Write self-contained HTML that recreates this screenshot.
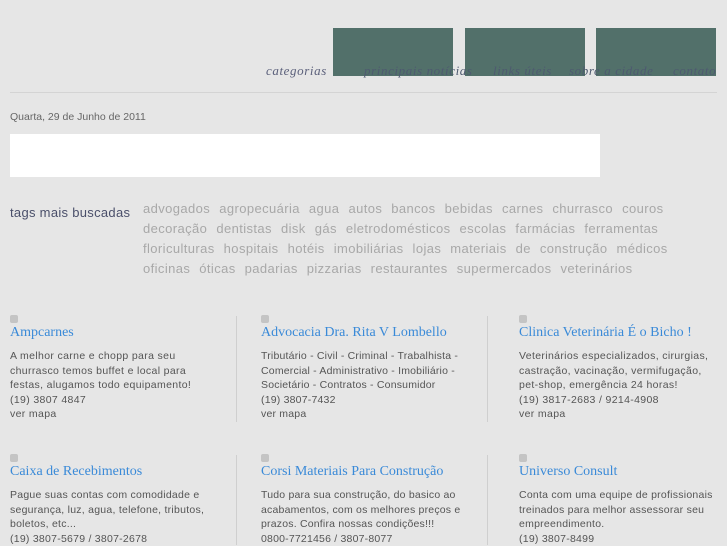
<!DOCTYPE html>
<html><head><meta charset="utf-8"><style>
body{margin:0;width:727px;height:545px;background:#e6e6e6;overflow:hidden;font-family:"Liberation Sans",sans-serif;position:relative}
.a{position:absolute;white-space:nowrap}
.box{position:absolute;top:28px;width:120px;height:48px;background:#52706a}
.nav{position:absolute;top:63px;font-family:"Liberation Serif",serif;font-style:italic;font-size:13px;color:#5a5f7a;letter-spacing:0.6px;white-space:nowrap}
.tag{position:absolute;left:143px;font-size:13px;color:#a8a8a8;word-spacing:5px;white-space:nowrap;letter-spacing:0.4px}
.t{position:absolute;font-family:"Liberation Serif",serif;font-size:14px;color:#3a8ad8;white-space:nowrap}
.d{position:absolute;width:8px;height:8px;border-radius:2px;background:#c4c4c4}
.p{position:absolute;font-size:10.5px;line-height:14.5px;color:#555;width:190px;letter-spacing:0.35px}
.v{position:absolute;width:1px;background:#cfcfcf}
</style></head><body>
<div class="box" style="left:333px"></div>
<div class="box" style="left:465px"></div>
<div class="box" style="left:596px"></div>
<div class="nav" style="left:266px">categorias</div>
<div class="nav" style="left:364px;color:#4e5a70">principais notícias</div>
<div class="nav" style="left:493px;color:#4e5a70">links úteis</div>
<div class="nav" style="left:569px;color:#4e5a70">sobre a cidade</div>
<div class="nav" style="left:673px;color:#4e5a70">contato</div>
<div class="a" style="left:10px;top:92px;width:707px;height:1px;background:#d4d4d4"></div>
<div class="a" style="left:10px;top:111px;font-size:10.5px;color:#666">Quarta, 29 de Junho de 2011</div>
<div class="a" style="left:10px;top:134px;width:590px;height:43px;background:#fff"></div>
<div class="a" style="left:10px;top:205px;font-size:13px;color:#4a4f6a;letter-spacing:0.3px">tags mais buscadas</div>
<div class="tag" style="top:201px">advogados agropecuária agua autos bancos bebidas carnes churrasco couros</div>
<div class="tag" style="top:221px">decoração dentistas disk gás eletrodomésticos escolas farmácias ferramentas</div>
<div class="tag" style="top:241px">floriculturas hospitais hotéis imobiliárias lojas materiais de construção médicos</div>
<div class="tag" style="top:261px">oficinas óticas padarias pizzarias restaurantes supermercados veterinários</div>
<div class="v" style="left:236px;top:316px;height:106px"></div>
<div class="v" style="left:487px;top:316px;height:106px"></div>
<div class="v" style="left:236px;top:455px;height:90px"></div>
<div class="v" style="left:487px;top:455px;height:90px"></div>

<div class="d" style="left:10px;top:315px"></div><div class="t" style="left:10px;top:325px">Ampcarnes</div>
<div class="p" style="left:10px;top:349px">A melhor carne e chopp para seu churrasco temos buffet e local para festas, alugamos todo equipamento!<br>(19) 3807 4847<br>ver mapa</div>
<div class="d" style="left:261px;top:315px"></div><div class="t" style="left:261px;top:325px">Advocacia Dra. Rita V Lombello</div>
<div class="p" style="left:261px;top:349px;width:205px;letter-spacing:0.2px">Tributário - Civil - Criminal - Trabalhista - Comercial - Administrativo - Imobiliário - Societário - Contratos - Consumidor<br>(19) 3807-7432<br>ver mapa</div>
<div class="d" style="left:519px;top:315px"></div><div class="t" style="left:519px;top:325px">Clinica Veterinária É o Bicho !</div>
<div class="p" style="left:519px;top:349px;width:200px">Veterinários especializados, cirurgias, castração, vacinação, vermifugação, pet-shop, emergência 24 horas!<br>(19) 3817-2683 / 9214-4908<br>ver mapa</div>

<div class="d" style="left:10px;top:454px"></div><div class="t" style="left:10px;top:464px">Caixa de Recebimentos</div>
<div class="p" style="left:10px;top:488px;width:200px;letter-spacing:0.25px">Pague suas contas com comodidade e segurança, luz, agua, telefone, tributos, boletos, etc...<br>(19) 3807-5679 / 3807-2678</div>
<div class="d" style="left:261px;top:454px"></div><div class="t" style="left:261px;top:464px">Corsi Materiais Para Construção</div>
<div class="p" style="left:261px;top:488px;width:205px;letter-spacing:0.2px">Tudo para sua construção, do basico ao acabamentos, com os melhores preços e prazos. Confira nossas condições!!!<br>0800-7721456 / 3807-8077</div>
<div class="d" style="left:519px;top:454px"></div><div class="t" style="left:519px;top:464px">Universo Consult</div>
<div class="p" style="left:519px;top:488px;width:205px;letter-spacing:0.25px">Conta com uma equipe de profissionais treinados para melhor assessorar seu empreendimento.<br>(19) 3807-8499</div>
</body></html>
